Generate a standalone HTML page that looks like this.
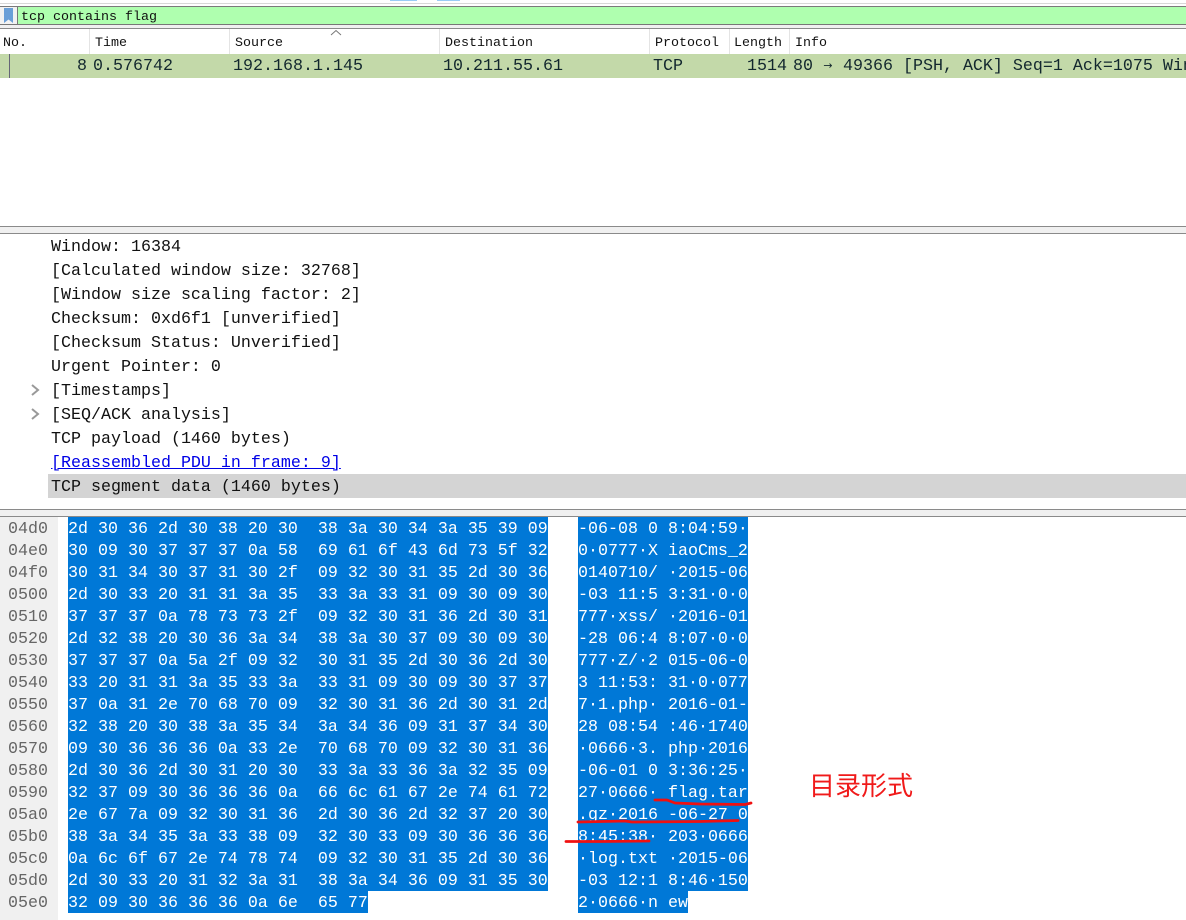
<!DOCTYPE html>
<html><head><meta charset="utf-8">
<style>
html,body{margin:0;padding:0;background:#fff}
#p{position:relative;width:1186px;height:920px;overflow:hidden;background:#fff;font-family:"Liberation Mono",monospace}
#p div{position:absolute;white-space:pre}
.h{top:29px;height:25px;line-height:30px;font-size:13.33px;color:#111}
.s{top:29px;width:1px;height:25px;background:#e4e4e4}
.c{top:54px;height:24px;line-height:26px;font-size:16.67px;color:#12272e}
.c span{display:inline-block;width:10px;text-align:center;font-family:"DejaVu Sans",sans-serif;font-size:11px;line-height:12px;vertical-align:1px}
.d{left:51px;height:24px;line-height:28px;font-size:16.67px;color:#111}
.o{left:8px;height:22px;line-height:26px;font-size:16.67px;color:#666}
.x{height:22px;line-height:26px;font-size:16.67px;color:#fff;background:#0078d7}
</style></head><body>
<div id="p">
<div style="left:390px;top:0;width:27px;height:1px;background:#99ccf5"></div>
<div style="left:437px;top:0;width:23px;height:1px;background:#99ccf5"></div>
<div style="left:0;top:3px;width:1186px;height:1px;background:#d8d8d8"></div>
<div style="left:0;top:6px;width:1186px;height:1px;background:#7a7a7a"></div>
<div style="left:0;top:7px;width:1186px;height:17px;background:#afffaf"></div>
<div style="left:0;top:7px;width:17px;height:17px;background:#f2f2f2"></div>
<svg style="position:absolute;left:3px;top:8px" width="12" height="16"><path d="M1 0H10V15L5.500 11.500L1 15Z" fill="#6a9fd8"/></svg>
<div style="left:17px;top:7px;width:1px;height:17px;background:#777"></div>
<div style="left:21px;top:7px;height:17px;line-height:22px;font-size:13.33px;color:#111">tcp contains flag</div>
<div style="left:0;top:24px;width:1186px;height:1px;background:#777"></div>
<div style="left:0;top:25px;width:1186px;height:3px;background:#f0f0f0"></div>
<div style="left:0;top:28px;width:1186px;height:1px;background:#8a8a8a"></div>

<div class="h" style="left:3px">No.</div>
<div class="s" style="left:89px"></div>
<div class="h" style="left:95px">Time</div>
<div class="s" style="left:229px"></div>
<div class="h" style="left:235px">Source</div>
<svg style="position:absolute;left:330px;top:29px" width="12" height="8"><path d="M1 6L6 1.500L11 6" fill="none" stroke="#777" stroke-width="1"/></svg>
<div class="s" style="left:439px"></div>
<div class="h" style="left:445px">Destination</div>
<div class="s" style="left:649px"></div>
<div class="h" style="left:655px">Protocol</div>
<div class="s" style="left:729px"></div>
<div class="h" style="left:734px">Length</div>
<div class="s" style="left:789px"></div>
<div class="h" style="left:795px">Info</div>

<div style="left:0;top:54px;width:1186px;height:24px;background:#c3d9a9"></div>
<div style="left:9px;top:54px;width:1px;height:24px;background:#667"></div>
<div class="c" style="left:77px">8</div>
<div class="c" style="left:93px">0.576742</div>
<div class="c" style="left:233px">192.168.1.145</div>
<div class="c" style="left:443px">10.211.55.61</div>
<div class="c" style="left:653px">TCP</div>
<div class="c" style="left:747px">1514</div>
<div class="c" style="left:793px">80 <span>→</span> 49366 [PSH, ACK] Seq=1 Ack=1075 Win=32768 Len=1460</div>

<div style="left:0;top:226px;width:1186px;height:1px;background:#8a8a8a"></div>
<div style="left:0;top:227px;width:1186px;height:6px;background:#f0f0f0"></div>
<div style="left:0;top:233px;width:1186px;height:1px;background:#8a8a8a"></div>

<div class="d" style="top:234px">Window: 16384</div>
<div class="d" style="top:258px">[Calculated window size: 32768]</div>
<div class="d" style="top:282px">[Window size scaling factor: 2]</div>
<div class="d" style="top:306px">Checksum: 0xd6f1 [unverified]</div>
<div class="d" style="top:330px">[Checksum Status: Unverified]</div>
<div class="d" style="top:354px">Urgent Pointer: 0</div>
<svg style="position:absolute;left:30px;top:384px" width="12" height="12"><path d="M2 1L8 6L2 11" fill="none" stroke="#999" stroke-width="2"/></svg>
<div class="d" style="top:378px">[Timestamps]</div>
<svg style="position:absolute;left:30px;top:408px" width="12" height="12"><path d="M2 1L8 6L2 11" fill="none" stroke="#999" stroke-width="2"/></svg>
<div class="d" style="top:402px">[SEQ/ACK analysis]</div>
<div class="d" style="top:426px">TCP payload (1460 bytes)</div>
<div class="d" style="top:450px;color:#0000e6;text-decoration:underline">[Reassembled PDU in frame: 9]</div>
<div style="left:48px;top:474px;width:1138px;height:24px;background:#d4d4d4"></div>
<div class="d" style="top:474px">TCP segment data (1460 bytes)</div>

<div style="left:0;top:509px;width:1186px;height:1px;background:#8a8a8a"></div>
<div style="left:0;top:510px;width:1186px;height:6px;background:#f0f0f0"></div>
<div style="left:0;top:516px;width:1186px;height:1px;background:#8a8a8a"></div>
<div style="left:0;top:517px;width:58px;height:403px;background:#f0f0f0"></div>

<div class="o" style="top:517px">04d0</div><div class="x" style="left:68px;top:517px">2d 30 36 2d 30 38 20 30  38 3a 30 34 3a 35 39 09</div><div class="x" style="left:578px;top:517px">-06-08 0 8:04:59·</div>
<div class="o" style="top:539px">04e0</div><div class="x" style="left:68px;top:539px">30 09 30 37 37 37 0a 58  69 61 6f 43 6d 73 5f 32</div><div class="x" style="left:578px;top:539px">0·0777·X iaoCms_2</div>
<div class="o" style="top:561px">04f0</div><div class="x" style="left:68px;top:561px">30 31 34 30 37 31 30 2f  09 32 30 31 35 2d 30 36</div><div class="x" style="left:578px;top:561px">0140710/ ·2015-06</div>
<div class="o" style="top:583px">0500</div><div class="x" style="left:68px;top:583px">2d 30 33 20 31 31 3a 35  33 3a 33 31 09 30 09 30</div><div class="x" style="left:578px;top:583px">-03 11:5 3:31·0·0</div>
<div class="o" style="top:605px">0510</div><div class="x" style="left:68px;top:605px">37 37 37 0a 78 73 73 2f  09 32 30 31 36 2d 30 31</div><div class="x" style="left:578px;top:605px">777·xss/ ·2016-01</div>
<div class="o" style="top:627px">0520</div><div class="x" style="left:68px;top:627px">2d 32 38 20 30 36 3a 34  38 3a 30 37 09 30 09 30</div><div class="x" style="left:578px;top:627px">-28 06:4 8:07·0·0</div>
<div class="o" style="top:649px">0530</div><div class="x" style="left:68px;top:649px">37 37 37 0a 5a 2f 09 32  30 31 35 2d 30 36 2d 30</div><div class="x" style="left:578px;top:649px">777·Z/·2 015-06-0</div>
<div class="o" style="top:671px">0540</div><div class="x" style="left:68px;top:671px">33 20 31 31 3a 35 33 3a  33 31 09 30 09 30 37 37</div><div class="x" style="left:578px;top:671px">3 11:53: 31·0·077</div>
<div class="o" style="top:693px">0550</div><div class="x" style="left:68px;top:693px">37 0a 31 2e 70 68 70 09  32 30 31 36 2d 30 31 2d</div><div class="x" style="left:578px;top:693px">7·1.php· 2016-01-</div>
<div class="o" style="top:715px">0560</div><div class="x" style="left:68px;top:715px">32 38 20 30 38 3a 35 34  3a 34 36 09 31 37 34 30</div><div class="x" style="left:578px;top:715px">28 08:54 :46·1740</div>
<div class="o" style="top:737px">0570</div><div class="x" style="left:68px;top:737px">09 30 36 36 36 0a 33 2e  70 68 70 09 32 30 31 36</div><div class="x" style="left:578px;top:737px">·0666·3. php·2016</div>
<div class="o" style="top:759px">0580</div><div class="x" style="left:68px;top:759px">2d 30 36 2d 30 31 20 30  33 3a 33 36 3a 32 35 09</div><div class="x" style="left:578px;top:759px">-06-01 0 3:36:25·</div>
<div class="o" style="top:781px">0590</div><div class="x" style="left:68px;top:781px">32 37 09 30 36 36 36 0a  66 6c 61 67 2e 74 61 72</div><div class="x" style="left:578px;top:781px">27·0666· flag.tar</div>
<div class="o" style="top:803px">05a0</div><div class="x" style="left:68px;top:803px">2e 67 7a 09 32 30 31 36  2d 30 36 2d 32 37 20 30</div><div class="x" style="left:578px;top:803px">.gz·2016 -06-27 0</div>
<div class="o" style="top:825px">05b0</div><div class="x" style="left:68px;top:825px">38 3a 34 35 3a 33 38 09  32 30 33 09 30 36 36 36</div><div class="x" style="left:578px;top:825px">8:45:38· 203·0666</div>
<div class="o" style="top:847px">05c0</div><div class="x" style="left:68px;top:847px">0a 6c 6f 67 2e 74 78 74  09 32 30 31 35 2d 30 36</div><div class="x" style="left:578px;top:847px">·log.txt ·2015-06</div>
<div class="o" style="top:869px">05d0</div><div class="x" style="left:68px;top:869px">2d 30 33 20 31 32 3a 31  38 3a 34 36 09 31 35 30</div><div class="x" style="left:578px;top:869px">-03 12:1 8:46·150</div>
<div class="o" style="top:891px">05e0</div><div class="x" style="left:68px;top:891px">32 09 30 36 36 36 0a 6e  65 77</div><div class="x" style="left:578px;top:891px">2·0666·n ew</div>

<svg style="position:absolute;left:0;top:0" width="1186" height="920">
<g fill="none" stroke="#f01010" stroke-width="2.800" stroke-linecap="round" stroke-linejoin="round">
<path d="M655 800H667L675 803L700 804L745 804.500L751 803"/>
<path d="M578 822L625 821L632 822L700 821.500L738 820.500"/>
<path d="M566 841.500L600 841.500L649 841"/>
</g></svg>
<div style="left:809px;top:769px;height:34px;line-height:34px;font-size:26px;color:#f01a1a;font-family:'Liberation Sans','Noto Sans CJK SC',sans-serif">目录形式</div>
</div>
</body></html>
